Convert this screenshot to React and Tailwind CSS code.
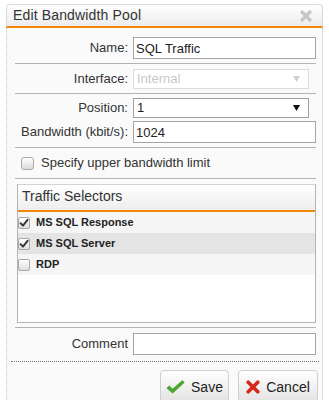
import React from 'react';

const Check = ({ checked }) => (
  <span className="flex h-[12px] w-[12px] shrink-0 items-center justify-center rounded-[2px] border border-[#a8a8a8] bg-gradient-to-b from-white to-[#dedede]">
    {checked && (
      <svg width="10" height="10" viewBox="0 0 10 10">
        <path d="M1.5 5.2 L4 7.7 L8.6 1.8" fill="none" stroke="#333" strokeWidth="1.9" strokeLinecap="round" strokeLinejoin="round" />
      </svg>
    )}
  </span>
);

const Arrow = ({ color }) => (
  <svg width="7" height="6" viewBox="0 0 7 6">
    <path d="M0 0 H7 L3.5 6 Z" fill={color} />
  </svg>
);

const Row = ({ label, children, className = '' }) => (
  <div className={`flex items-center ${className}`}>
    <div className="w-[113px] text-right">{label}</div>
    <div className="ml-[5px]">{children}</div>
  </div>
);

const Sep = ({ className = '' }) => <div className={`h-px bg-[#b4b4b4] ${className}`} />;

const selectors = [
  { name: 'MS SQL Response', checked: true, bg: 'bg-[#f5f5f5]' },
  { name: 'MS SQL Server', checked: true, bg: 'bg-[#e4e4e4]' },
  { name: 'RDP', checked: false, bg: 'bg-[#f5f5f5]' },
];

export default function App() {
  return (
    <div className="h-[400px] w-[329px] overflow-hidden bg-white px-[6px] pt-[4px] font-['Liberation_Sans',Arial,sans-serif] text-[13px] text-[#333]">
      <div className="flex h-[396px] w-[317px] flex-col">
        {/* Header */}
        <div className="flex h-[27px] items-center justify-between rounded-t-[4px] border border-b-2 border-[#dadada] border-b-[#f28705] bg-gradient-to-b from-white to-[#ececec] pl-[6px] pr-[10px]">
          <span className="text-[14px] tracking-[0.15px] text-[#333]">Edit Bandwidth Pool</span>
          <svg width="12" height="12" viewBox="0 0 12 12">
            <path d="M2 2 L10 10 M10 2 L2 10" stroke="#c6c6c6" strokeWidth="3.2" strokeLinecap="round" />
          </svg>
        </div>

        {/* Body */}
        <div className="flex-1 border-x border-dotted border-[#c8c8c8] bg-[#fafafa]">
          <div className="pl-[8px] pr-[6px] pt-[9px]">
            <Row label="Name:">
              <input
                readOnly
                defaultValue="SQL Traffic"
                className="h-[22px] w-[183px] border border-[#a5a5a5] bg-white pl-[2px] text-[13px] text-[#222] outline-none"
              />
            </Row>
            <Sep className="mt-[4px]" />
            <Row label="Interface:" className="mt-[5px]">
              <div className="flex h-[20px] w-[176px] items-center justify-between border border-[#dcdcdc] bg-white pl-[3px] pr-[8px] text-[#c8c8c8]">
                <span>Internal</span>
                <Arrow color="#cfcfcf" />
              </div>
            </Row>
            <Sep className="mt-[4px]" />
            <Row label="Position:" className="mt-[4px]">
              <div className="flex h-[20px] w-[176px] items-center justify-between border border-[#a0a0a0] bg-white pl-[3px] pr-[8px] text-[#222]">
                <span>1</span>
                <Arrow color="#111" />
              </div>
            </Row>
            <Row label="Bandwidth (kbit/s):" className="mt-[3px]">
              <input
                readOnly
                defaultValue="1024"
                className="h-[22px] w-[183px] border border-[#a5a5a5] bg-white pl-[2px] text-[13px] text-[#222] outline-none"
              />
            </Row>
            <Sep className="mt-[4px]" />
            <div className="flex h-[30px] items-center pl-[6px]">
              <span className="h-[13px] w-[13px] rounded-[3px] border border-[#a8a8a8] bg-gradient-to-b from-white to-[#dcdcdc]" />
              <span className="ml-[7px]">Specify upper bandwidth limit</span>
            </div>
            <Sep />

            {/* Traffic Selectors */}
            <div className="ml-[2px] mt-[5px] flex h-[139px] flex-col border border-[#b4b4b4] border-t-[#d4d4d4]">
              <div className="flex h-[27px] items-center rounded-t-[3px] border-b-2 border-[#f28705] bg-gradient-to-b from-white to-[#eeeeee] pb-[3px] pl-[4px] text-[14px]">
                Traffic Selectors
              </div>
              <div className="flex-1 bg-white">
                {selectors.map((s) => (
                  <div key={s.name} className={`flex h-[21px] items-center ${s.bg}`}>
                    <Check checked={s.checked} />
                    <span className="ml-[6px] text-[11px] font-bold text-[#222]">{s.name}</span>
                  </div>
                ))}
              </div>
            </div>

            <Sep className="mt-[4px]" />
            <Row label="Comment" className="mt-[5px]">
              <input
                readOnly
                defaultValue=""
                className="h-[22px] w-[183px] border border-[#a5a5a5] bg-white pl-[2px] text-[13px] outline-none"
              />
            </Row>
          </div>

          {/* Footer */}
          <div className="ml-[4px] mr-[3px] mt-[6px] border-t border-dotted border-[#777]">
            <div className="flex justify-end gap-[9px] pr-[1px] pt-[8px]">
              <button className="flex h-[34px] w-[69px] items-center justify-center gap-[6px] rounded-[4px] border border-[#cfcfcf] bg-gradient-to-b from-white to-[#e2e2e2] text-[14px] text-[#222]">
                <svg width="19" height="14" viewBox="0 0 19 14">
                  <path d="M0.5 8.2 L3.2 5.6 L6.6 8.8 L16.2 0.3 L18.7 2.6 L6.6 13.6 Z" fill="#4aa62d" />
                </svg>
                <span>Save</span>
              </button>
              <button className="flex h-[34px] w-[80px] items-center justify-center gap-[6px] rounded-[4px] border border-[#cfcfcf] bg-gradient-to-b from-white to-[#e2e2e2] text-[14px] text-[#222]">
                <svg width="14" height="14" viewBox="0 0 14 14">
                  <path d="M2.2 2.2 L11.8 11.8 M11.8 2.2 L2.2 11.8" stroke="#d5281b" strokeWidth="3.6" strokeLinecap="round" />
                </svg>
                <span>Cancel</span>
              </button>
            </div>
          </div>
        </div>
      </div>
    </div>
  );
}
